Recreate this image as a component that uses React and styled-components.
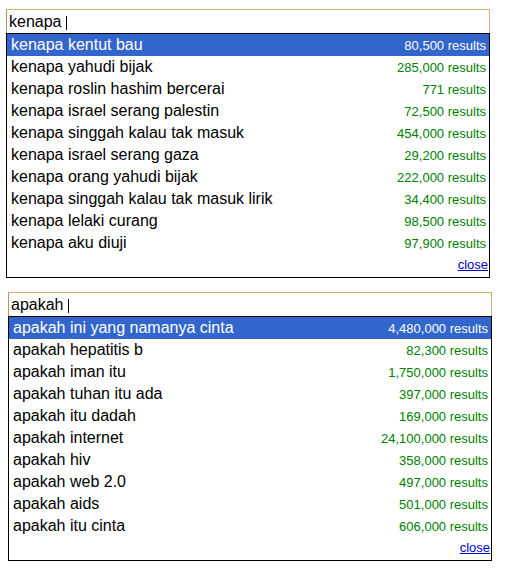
import React from "react";
import styled, { createGlobalStyle } from "styled-components";

const Global = createGlobalStyle`
  html, body { margin: 0; padding: 0; background: #fff; }
  body { font-family: "Liberation Sans", Arial, sans-serif; }
`;

const Page = styled.div`
  display: flex;
  flex-direction: column;
  gap: 14px;
  padding-top: 9px;
`;

const Panel = styled.div`
  width: 484px;
  margin-left: ${(p) => p.$offset}px;
  display: flex;
  flex-direction: column;
`;

const Input = styled.div`
  box-sizing: border-box;
  height: 24px;
  border-top: 1px solid #d2b36c;
  border-right: 1px solid #d2b36c;
  border-left: 1px solid #a8986e;
  padding-left: 2px;
  font-size: 16px;
  line-height: 23px;
  color: #000;
  white-space: pre;
`;

const Caret = styled.span`
  display: inline-block;
  width: 1px;
  height: 14px;
  background: #000;
  vertical-align: -3px;
`;

const Dropdown = styled.div`
  border: 1px solid #000;
  display: flex;
  flex-direction: column;
`;

const Row = styled.div`
  height: 22px;
  display: flex;
  align-items: baseline;
  justify-content: space-between;
  padding: 0 3px 0 4px;
  line-height: 22px;
  background: ${(p) => (p.$active ? "#3366cc" : "#fff")};
`;

const Query = styled.span`
  font-size: 16px;
  color: ${(p) => (p.$active ? "#fff" : "#000")};
`;

const Count = styled.span`
  font-size: 13px;
  color: ${(p) => (p.$active ? "#fff" : "#008000")};
`;

const CloseRow = styled.div`
  height: 23px;
  line-height: 22px;
  text-align: right;
  padding-right: 1px;
  font-size: 13px;
`;

const CloseLink = styled.a`
  color: #0000cc;
  text-decoration: underline;
  cursor: pointer;
`;

const data = [
  {
    offset: 6,
    query: "kenapa",
    items: [
      ["kenapa kentut bau", "80,500 results"],
      ["kenapa yahudi bijak", "285,000 results"],
      ["kenapa roslin hashim bercerai", "771 results"],
      ["kenapa israel serang palestin", "72,500 results"],
      ["kenapa singgah kalau tak masuk", "454,000 results"],
      ["kenapa israel serang gaza", "29,200 results"],
      ["kenapa orang yahudi bijak", "222,000 results"],
      ["kenapa singgah kalau tak masuk lirik", "34,400 results"],
      ["kenapa lelaki curang", "98,500 results"],
      ["kenapa aku diuji", "97,900 results"],
    ],
  },
  {
    offset: 8,
    query: "apakah",
    items: [
      ["apakah ini yang namanya cinta", "4,480,000 results"],
      ["apakah hepatitis b", "82,300 results"],
      ["apakah iman itu", "1,750,000 results"],
      ["apakah tuhan itu ada", "397,000 results"],
      ["apakah itu dadah", "169,000 results"],
      ["apakah internet", "24,100,000 results"],
      ["apakah hiv", "358,000 results"],
      ["apakah web 2.0", "497,000 results"],
      ["apakah aids", "501,000 results"],
      ["apakah itu cinta", "606,000 results"],
    ],
  },
];

export default function App() {
  return (
    <>
      <Global />
      <Page>
        {data.map((panel) => (
          <Panel key={panel.query} $offset={panel.offset}>
            <Input>
              {panel.query + " "}
              <Caret />
            </Input>
            <Dropdown>
              {panel.items.map(([q, c], i) => (
                <Row key={q} $active={i === 0}>
                  <Query $active={i === 0}>{q}</Query>
                  <Count $active={i === 0}>{c}</Count>
                </Row>
              ))}
              <CloseRow>
                <CloseLink>close</CloseLink>
              </CloseRow>
            </Dropdown>
          </Panel>
        ))}
      </Page>
    </>
  );
}
